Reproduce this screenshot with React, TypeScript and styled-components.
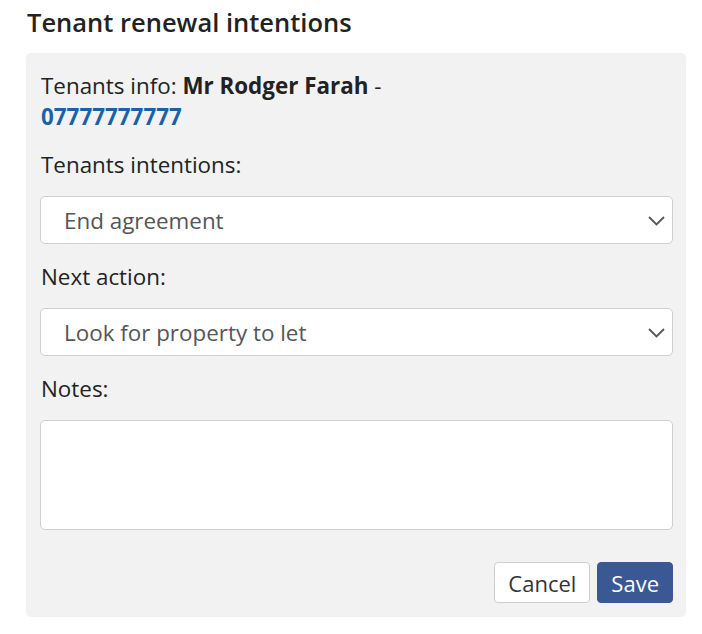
import React from 'react';
import styled, { createGlobalStyle } from 'styled-components';

const GlobalStyle = createGlobalStyle`
  body {
    margin: 0;
    background: #ffffff;
    font-family: "Open Sans", "Noto Sans", sans-serif;
    color: #222222;
  }
`;

const Page = styled.div`
  padding: 6px 16px 0 26px;
  width: 660px;
`;

const Title = styled.h2`
  font-size: 25.5px;
  font-weight: 600;
  line-height: 32px;
  margin: 0 0 15px 1px;
  color: #222222;
`;

const Panel = styled.form`
  background: #f2f2f2;
  border-radius: 5px;
  padding: 17px 13px 14px 14px;
  display: flex;
  flex-direction: column;
  gap: 17px;
`;

const Info = styled.div`
  font-size: 22.4px;
  line-height: 31px;
  padding-left: 1px;
  width: 390px;
`;

const Strong = styled.strong`
  font-weight: 700;
`;

const Phone = styled.a`
  color: #1a62a8;
  font-weight: 700;
  text-decoration: none;
`;

const Field = styled.div`
  display: flex;
  flex-direction: column;
  gap: 16px;
`;

const Label = styled.label`
  font-size: 22.4px;
  line-height: 31px;
  padding-left: 1px;
`;

const SelectBox = styled.div`
  position: relative;
  height: 48px;
`;

const Select = styled.select`
  appearance: none;
  width: 100%;
  height: 48px;
  box-sizing: border-box;
  background: #ffffff;
  border: 1px solid #cfcfcf;
  border-radius: 5px;
  padding: 0 40px 0 23px;
  font-family: inherit;
  font-size: 22.4px;
  color: #555555;
`;

const Chevron = styled.svg`
  position: absolute;
  right: 7px;
  top: 17px;
  pointer-events: none;
`;

const TextArea = styled.textarea`
  height: 110px;
  box-sizing: border-box;
  background: #ffffff;
  border: 1px solid #cfcfcf;
  border-radius: 5px;
  resize: none;
  font-family: inherit;
  font-size: 22px;
`;

const Actions = styled.div`
  display: flex;
  justify-content: flex-end;
  gap: 7px;
  margin-top: 15px;
`;

const Button = styled.button<{ $primary?: boolean }>`
  height: 41px;
  box-sizing: border-box;
  padding: 0 13px;
  border-radius: 4px;
  font-family: inherit;
  font-size: 22px;
  cursor: pointer;
  background: ${({ $primary }) => ($primary ? '#3a5894' : '#ffffff')};
  color: ${({ $primary }) => ($primary ? '#ffffff' : '#333333')};
  border: 1px solid ${({ $primary }) => ($primary ? '#3a5894' : '#cfcfcf')};
`;

const ChevronIcon = () => (
  <Chevron width="19" height="14" viewBox="0 0 19 14" fill="none">
    <path d="M2 4l7.5 7.5 7.5-7.5" stroke="#555555" strokeWidth="1.8" />
  </Chevron>
);

type DropdownProps = { value: string; options: string[] };

const Dropdown = ({ value, options }: DropdownProps) => (
  <SelectBox>
    <Select defaultValue={value}>
      {options.map(option => (
        <option key={option}>{option}</option>
      ))}
    </Select>
    <ChevronIcon />
  </SelectBox>
);

export default function App() {
  return (
    <Page>
      <GlobalStyle />
      <Title>Tenant renewal intentions</Title>
      <Panel onSubmit={e => e.preventDefault()}>
        <Info>
          Tenants info: <Strong>Mr Rodger Farah</Strong> - <Phone href="#">07777777777</Phone>
        </Info>
        <Field>
          <Label>Tenants intentions:</Label>
          <Dropdown value="End agreement" options={['Renew agreement', 'End agreement', 'Undecided']} />
        </Field>
        <Field>
          <Label>Next action:</Label>
          <Dropdown value="Look for property to let" options={['Look for property to let', 'Offer renewal', 'No action']} />
        </Field>
        <Field>
          <Label>Notes:</Label>
          <TextArea />
        </Field>
        <Actions>
          <Button type="button">Cancel</Button>
          <Button type="submit" $primary>Save</Button>
        </Actions>
      </Panel>
    </Page>
  );
}
